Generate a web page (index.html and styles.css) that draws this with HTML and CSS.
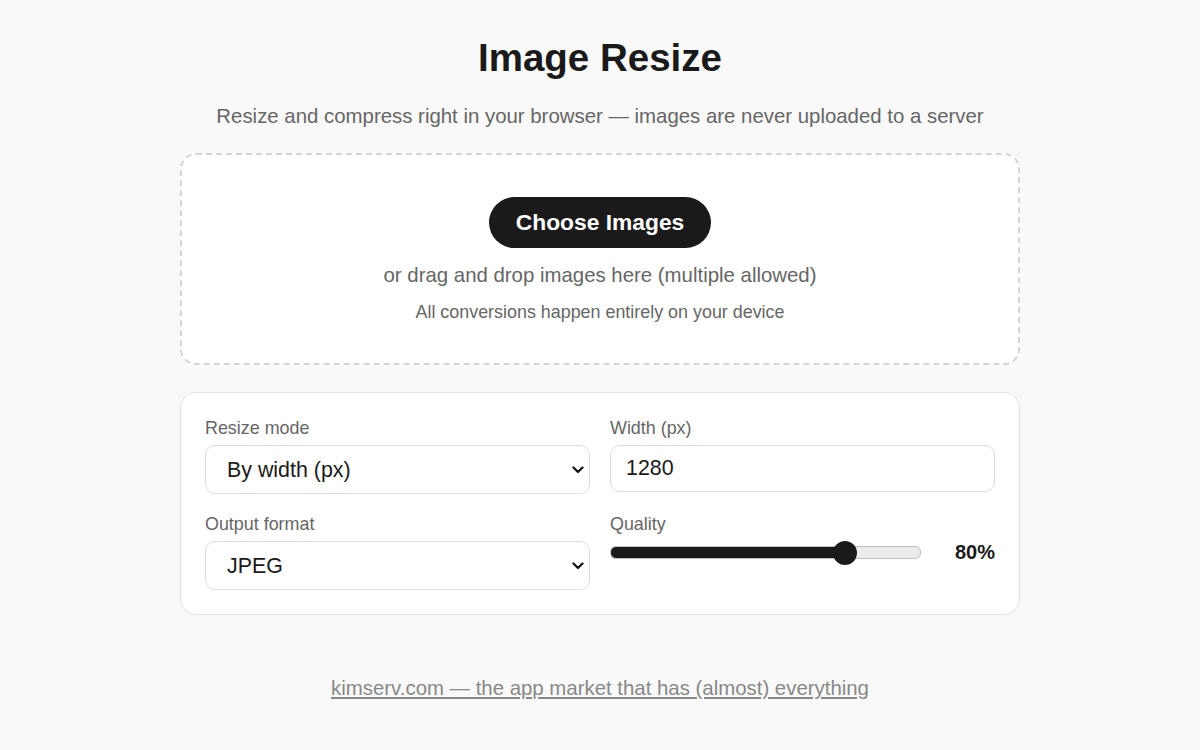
FILE: index.html
```html
<!DOCTYPE html>
<html>
<head>
    <title>Image Resize</title>
    <link rel="stylesheet" href="styles.css">
</head>
<body>

    <div class="page">
        <h1>Image Resize</h1>
        <p class="subtitle">Resize and compress right in your browser — images are never uploaded to a server</p>

        <div class="dropzone">
            <button class="choose-btn">Choose Images</button>
            <p class="drop-hint">or drag and drop images here (multiple allowed)</p>
            <p class="drop-note">All conversions happen entirely on your device</p>
        </div>

        <div class="settings">
            <div class="field">
                <label>Resize mode</label>
                <div class="select-wrap">
                    <select>
                        <option>By width (px)</option>
                        <option>By height (px)</option>
                        <option>By percent</option>
                    </select>
                    <svg class="chevron" viewBox="0 0 12 8" width="12" height="8"><path d="M1.5 1.5 L6 6 L10.5 1.5" fill="none" stroke="#111" stroke-width="2.2" stroke-linecap="round" stroke-linejoin="round"/></svg>
                </div>
            </div>
            <div class="field">
                <label>Width (px)</label>
                <input type="text" class="text-input" value="1280">
            </div>
            <div class="field">
                <label>Output format</label>
                <div class="select-wrap">
                    <select>
                        <option>JPEG</option>
                        <option>PNG</option>
                        <option>WEBP</option>
                    </select>
                    <svg class="chevron" viewBox="0 0 12 8" width="12" height="8"><path d="M1.5 1.5 L6 6 L10.5 1.5" fill="none" stroke="#111" stroke-width="2.2" stroke-linecap="round" stroke-linejoin="round"/></svg>
                </div>
            </div>
            <div class="field">
                <label>Quality</label>
                <div class="quality-row">
                    <input type="range" class="quality" min="10" max="100" value="80" style="--fill: 77.8%;">
                    <span class="quality-value">80%</span>
                </div>
            </div>
        </div>

        <div class="footer">
            <a href="#">kimserv.com — the app market that has (almost) everything</a>
        </div>
    </div>

</body>
</html>
```

FILE: styles.css
```css
body {
    font-family: "Liberation Sans", Arial, sans-serif;
    margin: 0;
    padding: 0;
    background-color: #f9f9f9;
    color: #1a1a1a;
}

.page {
    width: 840px;
    margin: 0 auto;
    padding-top: 35px;
    text-align: center;
}

h1 {
    font-size: 38.5px;
    line-height: 46px;
    margin: 0;
    font-weight: bold;
}

.subtitle {
    font-size: 20.4px;
    line-height: 30px;
    color: #666;
    margin: 20px 0 22px;
}

.dropzone {
    background: white;
    border: 2px dashed #d4d4d4;
    border-radius: 16px;
    padding: 42px 20px 39px;
}

.choose-btn {
    font-family: inherit;
    background-color: #1a1a1a;
    color: white;
    border: none;
    border-radius: 26px;
    font-size: 22.8px;
    font-weight: bold;
    line-height: 27px;
    padding: 12px 27px;
    cursor: pointer;
}

.drop-hint {
    font-size: 20.4px;
    line-height: 30px;
    color: #666;
    margin: 12px 0 0;
}

.drop-note {
    font-size: 17.9px;
    line-height: 24px;
    color: #666;
    margin: 10px 0 0;
}

.settings {
    margin-top: 27px;
    background: white;
    border: 1px solid #e2e2e2;
    border-radius: 16px;
    padding: 24px;
    display: grid;
    grid-template-columns: 1fr 1fr;
    gap: 19px 20px;
    text-align: left;
}

.field label {
    display: block;
    font-size: 17.9px;
    line-height: 22px;
    color: #666;
    margin-bottom: 6px;
}

.select-wrap {
    position: relative;
}

.select-wrap select {
    -webkit-appearance: none;
    appearance: none;
    width: 100%;
    height: 49px;
    font-family: inherit;
    font-size: 21.4px;
    color: #1a1a1a;
    background: white;
    border: 1px solid #dcdcdc;
    border-radius: 10px;
    padding: 0 40px 0 21px;
}

.chevron {
    position: absolute;
    right: 6px;
    top: 21px;
    pointer-events: none;
}

.text-input {
    box-sizing: border-box;
    width: 100%;
    height: 47px;
    font-family: inherit;
    font-size: 21.4px;
    color: #1a1a1a;
    border: 1px solid #dcdcdc;
    border-radius: 10px;
    padding: 0 15px;
}

.quality-row {
    display: flex;
    align-items: center;
    gap: 24px;
    margin-top: 4px;
}

.quality {
    -webkit-appearance: none;
    appearance: none;
    flex: 1;
    margin: 0;
    height: 11px;
    border-radius: 6px;
    border: 1px solid #bdbdbd;
    background: linear-gradient(to right, #1a1a1a 0, #1a1a1a var(--fill), #ececec var(--fill), #ececec 100%);
}

.quality::-webkit-slider-thumb {
    -webkit-appearance: none;
    width: 24px;
    height: 24px;
    border-radius: 50%;
    background: #1a1a1a;
    cursor: pointer;
}

.quality-value {
    width: 50px;
    text-align: right;
    font-size: 20px;
    font-weight: bold;
}

.footer {
    margin-top: 61px;
}

.footer a {
    font-size: 20.4px;
    line-height: 24px;
    color: #888;
}
```
